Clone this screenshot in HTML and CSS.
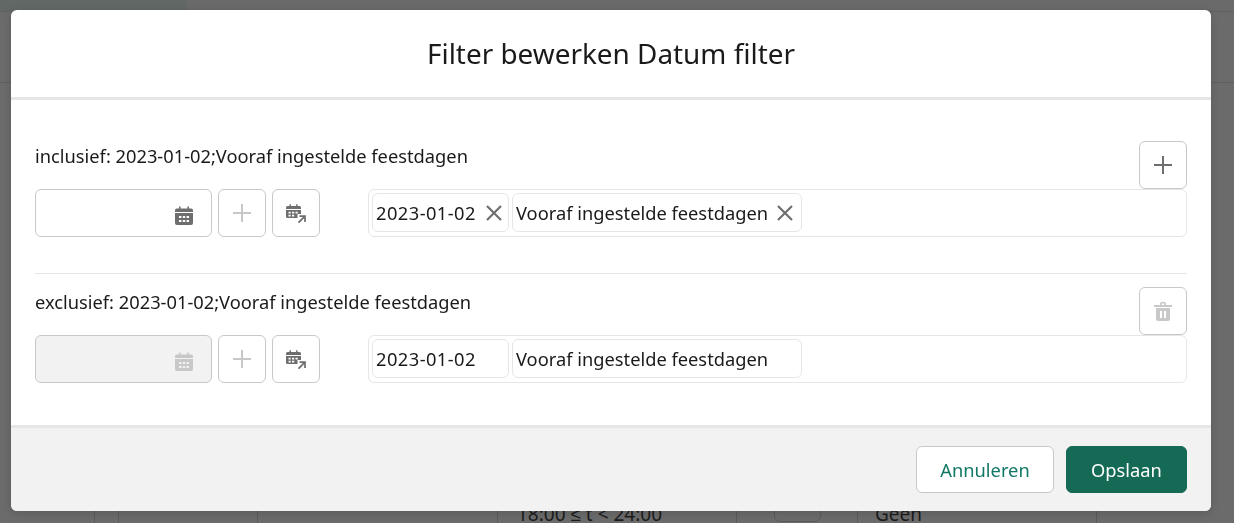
FILE: index.html
```html
<!DOCTYPE html>
<html lang="nl">
<head>
    <meta charset="UTF-8">
    <meta name="viewport" content="width=device-width, initial-scale=1.0">
    <title>Filter bewerken</title>
    <link rel="stylesheet" href="styles.css">
</head>
<body>

    <!-- page behind the dialog -->
    <div class="page">
        <div class="topbar">
            <div class="topbar-tab"></div>
        </div>
        <div class="subbar"></div>
        <div class="spacer"></div>
        <div class="table-row">
            <div class="cell cell-a"></div>
            <div class="cell cell-b"></div>
            <div class="cell cell-c"></div>
            <div class="cell cell-d">18:00 ≤ t &lt; 24:00</div>
            <div class="cell cell-e"><span class="mini-box"></span></div>
            <div class="cell cell-f">Geen</div>
            <div class="cell cell-g"></div>
        </div>
    </div>

    <svg class="icon-defs" width="0" height="0">
        <symbol id="i-calendar" viewBox="0 0 18 19">
            <path fill-rule="evenodd" d="M4 0.5h1.6v2H12.4v-2H14v2h2.2A1.8 1.8 0 0 1 18 4.3V6H0V4.3A1.8 1.8 0 0 1 1.8 2.5H4zM0 7H18V17A2 2 0 0 1 16 19H2A2 2 0 0 1 0 17zM4 10v2h2.4v-2zM7.8 10v2h2.4v-2zM11.6 10v2H14v-2zM4 14v2h2.4v-2zM7.8 14v2h2.4v-2zM11.6 14v2H14v-2z"/>
        </symbol>
        <symbol id="i-calendar-arrow" viewBox="0 0 20 19">
            <path fill-rule="evenodd" d="M3.5 0.2h1.4v1.8h5.2V0.2h1.4V2h2A1.5 1.5 0 0 1 15 3.5V5H0V3.5A1.5 1.5 0 0 1 1.5 2h2zM0 6H15V10H11.5V14H1.5A1.5 1.5 0 0 1 0 12.500zM2.500 7.800v1.800h2.200v-1.800zM6 7.800v1.800h2.200v-1.800zM9.500 7.800v1.800h2.200v-1.800zM2.500 10.800v1.800h2.200v-1.800zM6 10.800v1.800h2.200v-1.800z"/>
            <path d="M13.500 12.200H19V18M19 12.200L12.500 18.700" fill="none" stroke="currentColor" stroke-width="1.700"/>
        </symbol>
        <symbol id="i-plus" viewBox="0 0 18 18">
            <path d="M9 0V18M0 9H18" fill="none" stroke="currentColor" stroke-width="2"/>
        </symbol>
        <symbol id="i-close" viewBox="0 0 16 16">
            <path d="M1 1L15 15M15 1L1 15" fill="none" stroke="currentColor" stroke-width="2.200"/>
        </symbol>
        <symbol id="i-trash" viewBox="0 0 18 19">
            <path fill-rule="evenodd" d="M6 3V1.500A1.500 1.500 0 0 1 7.500 0h3A1.500 1.500 0 0 1 12 1.500V3h6V5H0V3zM7.500 1.500V3h3V1.500zM2 6H16V17A2 2 0 0 1 14 19H4A2 2 0 0 1 2 17zM6 9V16H8V9zM10 9V16H12V9z"/>
        </symbol>
    </svg>

    <div class="modal">
        <header class="modal-header">
            <h1>Filter bewerken Datum filter</h1>
        </header>

        <div class="modal-body">
            <section class="filter-block">
                <div class="filter-head">
                    <span class="filter-label">inclusief: 2023-01-02;Vooraf ingestelde feestdagen</span>
                    <button class="btn-icon"><svg class="ic-plus"><use href="#i-plus"/></svg></button>
                </div>
                <div class="filter-row">
                    <div class="date-input">
                        <svg class="ic-cal"><use href="#i-calendar"/></svg>
                    </div>
                    <button class="btn-icon is-disabled"><svg class="ic-plus"><use href="#i-plus"/></svg></button>
                    <button class="btn-icon"><svg class="ic-cal-arrow"><use href="#i-calendar-arrow"/></svg></button>
                    <div class="chip-box">
                        <span class="chip chip-date">2023-01-02<svg class="ic-close"><use href="#i-close"/></svg></span>
                        <span class="chip chip-holiday">Vooraf ingestelde feestdagen<svg class="ic-close"><use href="#i-close"/></svg></span>
                    </div>
                </div>
            </section>

            <hr class="divider">

            <section class="filter-block">
                <div class="filter-head">
                    <span class="filter-label">exclusief: 2023-01-02;Vooraf ingestelde feestdagen</span>
                    <button class="btn-icon is-disabled"><svg class="ic-trash"><use href="#i-trash"/></svg></button>
                </div>
                <div class="filter-row">
                    <div class="date-input is-disabled">
                        <svg class="ic-cal"><use href="#i-calendar"/></svg>
                    </div>
                    <button class="btn-icon is-disabled"><svg class="ic-plus"><use href="#i-plus"/></svg></button>
                    <button class="btn-icon"><svg class="ic-cal-arrow"><use href="#i-calendar-arrow"/></svg></button>
                    <div class="chip-box">
                        <span class="chip chip-date">2023-01-02</span>
                        <span class="chip chip-holiday">Vooraf ingestelde feestdagen</span>
                    </div>
                </div>
            </section>
        </div>

        <footer class="modal-footer">
            <button class="btn btn-cancel">Annuleren</button>
            <button class="btn btn-save">Opslaan</button>
        </footer>
    </div>

</body>
</html>
```
FILE: styles.css
```css
html, body {
    margin: 0;
    height: 100%;
    overflow: hidden;
}

body {
    font-family: "Noto Sans", Arial, sans-serif;
    background-color: #6b6b6b;
    color: #1a1a1a;
}

/* dimmed page behind the dialog */
.page {
    height: 523px;
    display: flex;
    flex-direction: column;
    overflow: hidden;
}

.topbar {
    height: 11px;
    background-color: #6a6a6a;
    border-bottom: 1px solid #616161;
    flex: none;
}

.topbar-tab {
    width: 187px;
    height: 11px;
    background-color: #626866;
}

.subbar {
    height: 70px;
    border-bottom: 1px solid #5f5f5f;
    flex: none;
}

.spacer {
    flex: 1;
}

.table-row {
    height: 30px;
    padding-left: 94px;
    display: flex;
    flex: none;
    font-size: 19px;
    line-height: 42px;
    color: #1c1c1c;
}

.cell {
    box-sizing: border-box;
    border-left: 1px solid #5a5a5a;
    white-space: nowrap;
}

.cell-a { width: 24px; }
.cell-b { width: 139px; }
.cell-c { width: 240px; }
.cell-d { width: 239px; padding-left: 19px; }
.cell-e { width: 121px; padding-left: 37px; }
.cell-f { width: 239px; padding-left: 17px; }
.cell-g { width: 100px; }

.mini-box {
    display: block;
    width: 47px;
    height: 29px;
    border: 1px solid #5a5a5a;
    border-radius: 6px;
    box-sizing: border-box;
}

/* dialog */
.icon-defs {
    position: absolute;
}

.modal {
    position: fixed;
    left: 11px;
    top: 10px;
    width: 1200px;
    height: 501px;
    display: flex;
    flex-direction: column;
    background-color: #fff;
    border-radius: 6px;
    overflow: hidden;
    box-shadow: 0 2px 8px rgba(0, 0, 0, 0.15);
}

.modal-header {
    height: 87px;
    flex: none;
    display: flex;
    align-items: center;
    justify-content: center;
    border-bottom: 3px solid #e6e6e6;
}

.modal-header h1 {
    margin: 0 0 2px;
    font-size: 27.9px;
    font-weight: 400;
}

.modal-body {
    flex: 1;
    padding: 41px 24px 0;
}

.filter-head {
    height: 48px;
    display: flex;
    justify-content: space-between;
}

.filter-label {
    font-size: 18.3px;
    line-height: 30px;
}

.filter-row {
    display: flex;
    gap: 6px;
}

.divider {
    height: 1px;
    border: 0;
    background-color: #e6e6e6;
    margin: 36px 0 13px;
}

.date-input {
    box-sizing: border-box;
    width: 177px;
    height: 48px;
    border: 1px solid #c8c8c8;
    border-radius: 6px;
    display: flex;
    align-items: center;
    justify-content: flex-end;
    padding-right: 18px;
    color: #6e6e6e;
}

.date-input.is-disabled {
    background-color: #f2f2f2;
    color: #c8c8c8;
}

.btn-icon {
    box-sizing: border-box;
    width: 48px;
    height: 48px;
    padding: 0;
    background-color: #fff;
    border: 1px solid #c8c8c8;
    border-radius: 6px;
    display: flex;
    align-items: center;
    justify-content: center;
    color: #6e6e6e;
    position: relative;
    z-index: 1;
}

.btn-icon.is-disabled {
    color: #c8c8c8;
}

.ic-plus {
    width: 18px;
    height: 18px;
}

.ic-cal {
    width: 18px;
    height: 19px;
    fill: currentColor;
    margin-top: 5px;
}

.ic-cal-arrow {
    width: 20px;
    height: 19px;
    fill: currentColor;
}

.ic-trash {
    width: 18px;
    height: 19px;
    fill: currentColor;
}

.ic-close {
    width: 16px;
    height: 16px;
    margin-left: 10px;
    color: #6e6e6e;
    flex: none;
}

.chip-box {
    box-sizing: border-box;
    flex: 1;
    height: 48px;
    margin-left: 42px;
    border: 1px solid #e6e6e6;
    border-radius: 6px;
    padding: 3px;
    display: flex;
    gap: 3px;
    align-items: flex-start;
}

.chip {
    box-sizing: border-box;
    height: 39px;
    padding-left: 3px;
    border: 1px solid #e6e6e6;
    border-radius: 6px;
    display: flex;
    align-items: center;
    font-size: 18.3px;
    white-space: nowrap;
}

.chip-date {
    width: 137px;
    letter-spacing: 0.45px;
}

.chip-holiday {
    width: 290px;
}

.chip-holiday .ic-close {
    margin-left: 9px;
}

/* footer */
.modal-footer {
    flex: none;
    box-sizing: border-box;
    height: 86px;
    border-top: 3px solid #e6e6e6;
    background-color: #f2f2f2;
    padding: 18px 24px;
    display: flex;
    justify-content: flex-end;
    gap: 12px;
}

.btn {
    height: 47px;
    font-family: inherit;
    font-size: 18.3px;
    border-radius: 6px;
    box-sizing: border-box;
}

.btn-cancel {
    width: 138px;
    background-color: #fff;
    color: #117865;
    border: 1px solid #c8c8c8;
}

.btn-save {
    width: 121px;
    background-color: #146a55;
    color: #fff;
    border: 1px solid #146a55;
}
```
